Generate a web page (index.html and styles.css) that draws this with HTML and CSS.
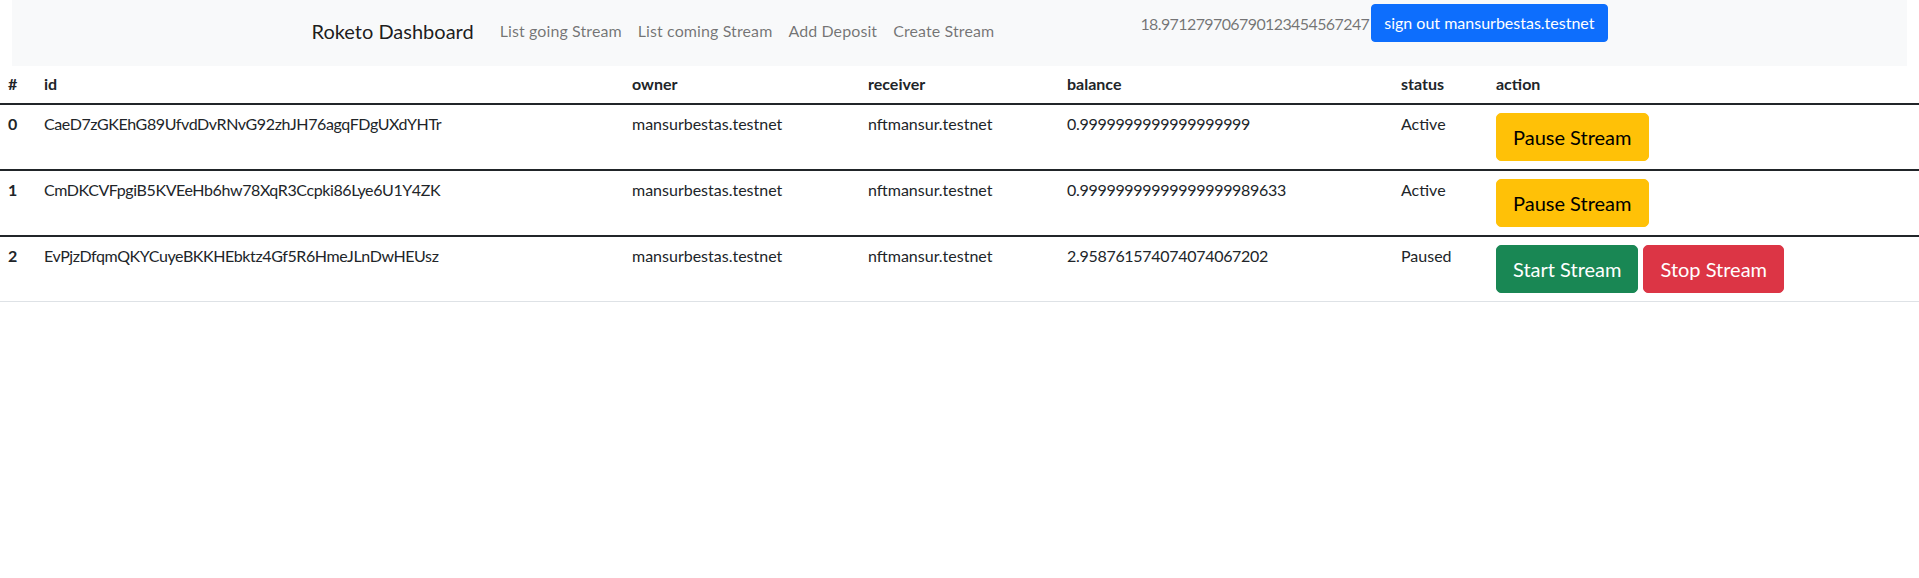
FILE: index.html
```html
<!DOCTYPE html>
<html lang="en">
<head>
<meta charset="utf-8">
<title>Roketo Dashboard</title>
<link rel="stylesheet" href="styles.css">
</head>
<body>
<div class="top">
  <nav class="navbar">
    <div class="nav-inner">
      <div class="nav-left">
        <a class="brand" href="#">Roketo Dashboard</a>
        <ul class="nav-links">
          <li><a class="nav-link" href="#">List going Stream</a></li>
          <li><a class="nav-link" href="#">List coming Stream</a></li>
          <li><a class="nav-link" href="#">Add Deposit</a></li>
          <li><a class="nav-link" href="#">Create Stream</a></li>
        </ul>
      </div>
      <div class="nav-right">
        <span class="balance">18.971279706790123454567247</span>
        <button class="btn btn-primary" type="button">sign out mansurbestas.testnet</button>
      </div>
    </div>
  </nav>
</div>
<table class="streams">
  <colgroup>
    <col class="c-num">
    <col class="c-id">
    <col class="c-owner">
    <col class="c-receiver">
    <col class="c-balance">
    <col class="c-status">
    <col class="c-action">
  </colgroup>
  <thead>
    <tr>
      <th>#</th>
      <th>id</th>
      <th>owner</th>
      <th>receiver</th>
      <th>balance</th>
      <th>status</th>
      <th>action</th>
    </tr>
  </thead>
  <tbody>
    <tr>
      <th>0</th>
      <td class="id">CaeD7zGKEhG89UfvdDvRNvG92zhJH76agqFDgUXdYHTr</td>
      <td>mansurbestas.testnet</td>
      <td>nftmansur.testnet</td>
      <td class="amount">0.9999999999999999999</td>
      <td>Active</td>
      <td class="action"><div class="actions"><button class="btn btn-lg btn-warning" type="button">Pause Stream</button></div></td>
    </tr>
  </tbody>
  <tbody>
    <tr>
      <th>1</th>
      <td class="id">CmDKCVFpgiB5KVEeHb6hw78XqR3Ccpki86Lye6U1Y4ZK</td>
      <td>mansurbestas.testnet</td>
      <td>nftmansur.testnet</td>
      <td class="amount">0.99999999999999999989633</td>
      <td>Active</td>
      <td class="action"><div class="actions"><button class="btn btn-lg btn-warning" type="button">Pause Stream</button></div></td>
    </tr>
  </tbody>
  <tbody class="last">
    <tr>
      <th>2</th>
      <td class="id">EvPjzDfqmQKYCuyeBKKHEbktz4Gf5R6HmeJLnDwHEUsz</td>
      <td>mansurbestas.testnet</td>
      <td>nftmansur.testnet</td>
      <td class="amount">2.958761574074074067202</td>
      <td>Paused</td>
      <td class="action"><div class="actions"><button class="btn btn-lg btn-success" type="button">Start Stream</button><button class="btn btn-lg btn-danger" type="button">Stop Stream</button></div></td>
    </tr>
  </tbody>
</table>
</body>
</html>
```

FILE: styles.css
```css
* {
  box-sizing: border-box;
}

html, body {
  margin: 0;
  padding: 0;
  background: #fff;
}

body {
  font-family: "Segoe UI", Lato, "Noto Sans", sans-serif;
  font-size: 16px;
  line-height: 1.5;
  color: #212529;
}

.top {
  padding: 0 12px;
}

.navbar {
  background: #f8f9fa;
  height: 66px;
}

.nav-inner {
  max-width: 1320px;
  height: 100%;
  margin: 0 auto;
  padding: 0 12px;
  display: flex;
  justify-content: space-between;
  align-items: flex-start;
}

.nav-left {
  display: flex;
  align-items: center;
  height: 100%;
  padding-bottom: 4px;
}

.brand {
  font-size: 20px;
  line-height: 30px;
  padding: 5px 0;
  margin-right: 18px;
  color: rgba(0, 0, 0, 0.9);
  text-decoration: none;
  white-space: nowrap;
}

.nav-links {
  list-style: none;
  margin: 0;
  padding: 0;
  display: flex;
}

.nav-link {
  display: block;
  padding: 8px;
  color: rgba(0, 0, 0, 0.55);
  text-decoration: none;
  white-space: nowrap;
  letter-spacing: 0.1px;
}

.nav-right {
  display: flex;
  align-items: center;
  margin-top: 4px;
}

.balance {
  color: rgba(0, 0, 0, 0.55);
  margin-right: 2px;
  white-space: nowrap;
  letter-spacing: -0.6px;
  position: relative;
  top: 1px;
}

.btn {
  display: inline-block;
  font-family: inherit;
  font-size: 16px;
  line-height: 24px;
  padding: 6px 12px;
  border: 1px solid transparent;
  border-radius: 4px;
  cursor: pointer;
  white-space: nowrap;
}

.btn-lg {
  font-size: 20px;
  line-height: 30px;
  padding: 8px 16px;
  border-radius: 5px;
}

.btn-primary {
  background: #0d6efd;
  border-color: #0d6efd;
  color: #fff;
}

.btn-warning {
  background: #ffc107;
  border-color: #ffc107;
  color: #000;
}

.btn-success {
  background: #198754;
  border-color: #198754;
  color: #fff;
}

.btn-danger {
  background: #dc3545;
  border-color: #dc3545;
  color: #fff;
}

.streams {
  width: 100%;
  table-layout: fixed;
  border-collapse: separate;
  border-spacing: 0;
}

.c-num { width: 36px; }
.c-id { width: 588px; }
.c-owner { width: 236px; }
.c-receiver { width: 199px; }
.c-balance { width: 334px; }
.c-status { width: 95px; }

.streams th,
.streams td {
  text-align: left;
  vertical-align: top;
  padding: 7px 8px 9px;
  white-space: nowrap;
}

.streams thead th {
  padding: 6px 8px 7px;
  font-weight: 700;
}

.streams tbody th {
  font-weight: 700;
}

.streams td.action {
  padding: 8px;
}

.streams td.id {
  letter-spacing: -0.4px;
}

.streams td.amount {
  letter-spacing: -0.3px;
}

.streams tbody th,
.streams tbody td {
  border-top: 2px solid #212529;
}

.streams tbody.last th,
.streams tbody.last td {
  border-bottom: 1px solid #dee2e6;
}

.actions {
  display: flex;
  gap: 5px;
}
```
